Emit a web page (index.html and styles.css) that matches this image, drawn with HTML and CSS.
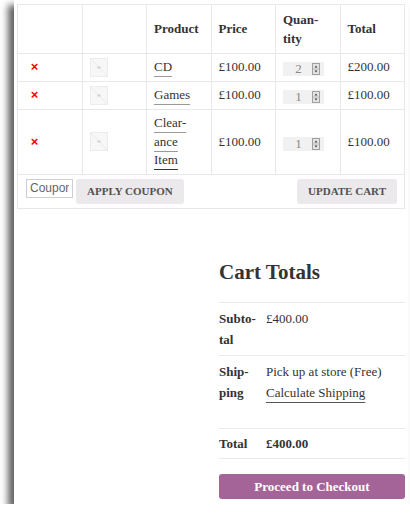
FILE: index.html
```html
<!DOCTYPE html>
<html>
<head>
<meta charset="utf-8">
<title>Cart</title>
<link rel="stylesheet" href="styles.css">
</head>
<body>
<div class="page">
  <table class="cart">
    <thead>
      <tr>
        <th></th>
        <th></th>
        <th>Product</th>
        <th>Price</th>
        <th>Quan-<br>tity</th>
        <th>Total</th>
      </tr>
    </thead>
    <tbody>
      <tr>
        <td><span class="remove">×</span></td>
        <td><svg class="thumb" width="18" height="19" viewBox="0 0 18 19"><rect x=".5" y=".5" width="17" height="18" fill="#f7f7f7" stroke="#ececec"/><path d="M1 1L17 18" stroke="#ebebeb"/><rect x="7.5" y="8.5" width="3" height="2" fill="#cfcfcf"/></svg></td>
        <td><a class="plink">CD</a></td>
        <td>£100.00</td>
        <td><span class="qty"><span class="qty-val">2</span><svg class="spin" width="8" height="12" viewBox="0 0 8 12"><rect x=".5" y=".5" width="7" height="11" fill="#e4e4e4" stroke="#a0a0a0"/><path d="M1 6H7" stroke="#bbb"/><path d="M2.5 4.5L4 2.5L5.5 4.5Z M2.5 7.5L4 9.5L5.5 7.5Z" fill="#444"/></svg></span></td>
        <td>£200.00</td>
      </tr>
      <tr>
        <td><span class="remove">×</span></td>
        <td><svg class="thumb" width="18" height="19" viewBox="0 0 18 19"><rect x=".5" y=".5" width="17" height="18" fill="#f7f7f7" stroke="#ececec"/><path d="M1 1L17 18" stroke="#ebebeb"/><rect x="7.5" y="8.5" width="3" height="2" fill="#cfcfcf"/></svg></td>
        <td><a class="plink">Games</a></td>
        <td>£100.00</td>
        <td><span class="qty"><span class="qty-val">1</span><svg class="spin" width="8" height="12" viewBox="0 0 8 12"><rect x=".5" y=".5" width="7" height="11" fill="#e4e4e4" stroke="#a0a0a0"/><path d="M1 6H7" stroke="#bbb"/><path d="M2.5 4.5L4 2.5L5.5 4.5Z M2.5 7.5L4 9.5L5.5 7.5Z" fill="#444"/></svg></span></td>
        <td>£100.00</td>
      </tr>
      <tr>
        <td><span class="remove">×</span></td>
        <td><svg class="thumb" width="18" height="19" viewBox="0 0 18 19"><rect x=".5" y=".5" width="17" height="18" fill="#f7f7f7" stroke="#ececec"/><path d="M1 1L17 18" stroke="#ebebeb"/><rect x="7.5" y="8.5" width="3" height="2" fill="#cfcfcf"/></svg></td>
        <td><a class="plink">Clear-</a><br><a class="plink">ance</a><br><a class="plink dark">Item</a></td>
        <td>£100.00</td>
        <td><span class="qty"><span class="qty-val">1</span><svg class="spin" width="8" height="12" viewBox="0 0 8 12"><rect x=".5" y=".5" width="7" height="11" fill="#e4e4e4" stroke="#a0a0a0"/><path d="M1 6H7" stroke="#bbb"/><path d="M2.5 4.5L4 2.5L5.5 4.5Z M2.5 7.5L4 9.5L5.5 7.5Z" fill="#444"/></svg></span></td>
        <td>£100.00</td>
      </tr>
      <tr class="actions">
        <td colspan="6">
          <div class="actions-inner">
            <div class="coupon">
              <input class="coupon-input" type="text" placeholder="Coupon code">
              <button class="btn">APPLY COUPON</button>
            </div>
            <button class="btn">UPDATE CART</button>
          </div>
        </td>
      </tr>
    </tbody>
  </table>

  <div class="collaterals">
    <div class="cart-totals">
      <h2>Cart Totals</h2>
      <table class="totals">
        <tr>
          <th>Subto-<br>tal</th>
          <td>£400.00</td>
        </tr>
        <tr class="shipping">
          <th>Ship-<br>ping</th>
          <td>
            <div>Pick up at store (Free)</div>
            <div class="calc"><a class="calc-link">Calculate Shipping</a></div>
          </td>
        </tr>
        <tr class="order-total">
          <th>Total</th>
          <td><strong>£400.00</strong></td>
        </tr>
      </table>
      <a class="checkout">Proceed to Checkout</a>
    </div>
  </div>
</div>
</body>
</html>
```

FILE: styles.css
```css
* {
  box-sizing: border-box;
}

html,
body {
  margin: 0;
  background: #fff;
}

body {
  font-family: "Liberation Serif", "Times New Roman", serif;
  font-size: 13px;
  color: #333;
  overflow: hidden;
}

.page {
  margin-left: 14px;
  width: 394px;
  height: 504px;
  padding: 4px 3px 0 3px;
  background: #fff;
  box-shadow: -6px 5px 7px rgba(0, 0, 0, 0.62);
}

/* cart table */
.cart {
  width: 388px;
  border-collapse: collapse;
  table-layout: fixed;
  line-height: 18.5px;
}

.cart th,
.cart td {
  border: 1px solid #e8e8e8;
  text-align: left;
  vertical-align: middle;
}

.cart th {
  padding: 6px 7px 5px;
  font-weight: bold;
}

.cart td {
  padding: 4px 7px;
}

.remove {
  display: block;
  width: 19px;
  text-align: center;
  font-family: "Liberation Sans", Arial, sans-serif;
  font-weight: bold;
  font-size: 13px;
  color: #f00;
}

.thumb {
  display: block;
}

.plink {
  color: #333;
  text-decoration: underline;
  text-decoration-color: #9a9a9a;
  text-underline-offset: 5px;
}

.plink.dark {
  text-decoration-color: #333;
}

.qty {
  display: inline-flex;
  align-items: center;
  vertical-align: -2px;
  width: 41px;
  height: 14px;
  line-height: 14px;
  padding: 0 4px 0 2px;
  background: #f1f1f1;
  color: #888;
}

.qty-val {
  flex: 1;
  text-align: center;
}

.spin {
  display: block;
}

/* actions row */
.actions td {
  padding: 4px 7px 4px 8px;
}

.actions-inner {
  display: flex;
  justify-content: space-between;
  align-items: flex-start;
}

.coupon {
  display: flex;
  align-items: flex-start;
  gap: 3px;
}

.coupon-input {
  width: 47px;
  height: 19px;
  margin: 0;
  padding: 0 3px;
  border: 1px solid #cfcfcf;
  font-family: "Liberation Sans", Arial, sans-serif;
  font-size: 12px;
  color: #666;
  background: #fff;
}

.coupon-input::placeholder {
  color: #666;
}

.btn {
  height: 25px;
  margin: 0;
  padding: 0 11px;
  border: none;
  border-radius: 3px;
  background: #ebe9eb;
  color: #515151;
  font-family: "Liberation Serif", "Times New Roman", serif;
  font-weight: bold;
  font-size: 11px;
  line-height: 25px;
}

/* totals */
.collaterals {
  display: flex;
  justify-content: flex-end;
  margin-top: 51px;
}

.cart-totals {
  width: 186px;
}

.cart-totals h2 {
  margin: 0 0 17px;
  font-size: 21px;
  line-height: 25px;
  font-weight: bold;
  color: #333;
}

.totals {
  width: 100%;
  border-collapse: collapse;
  line-height: 21px;
}

.totals tr {
  border-top: 1px solid #ebebeb;
  border-bottom: 1px solid #ebebeb;
}

.totals th,
.totals td {
  vertical-align: top;
  text-align: left;
}

.totals th {
  width: 47px;
  padding: 5px 7px 5px 0;
  font-weight: bold;
}

.totals td {
  padding: 5px 0;
}

.shipping td {
  padding-bottom: 25px;
}

.order-total th,
.order-total td {
  padding: 4px 0 4px;
}

.order-total th {
  padding-right: 7px;
}

.calc-link {
  color: #333;
  text-decoration: underline;
  text-decoration-color: #555;
  text-underline-offset: 5px;
}

.checkout {
  display: block;
  margin-top: 15px;
  height: 25px;
  line-height: 25px;
  border-radius: 3px;
  background: #a46497;
  color: #fff;
  text-align: center;
  font-weight: bold;
  font-size: 13px;
}
```
